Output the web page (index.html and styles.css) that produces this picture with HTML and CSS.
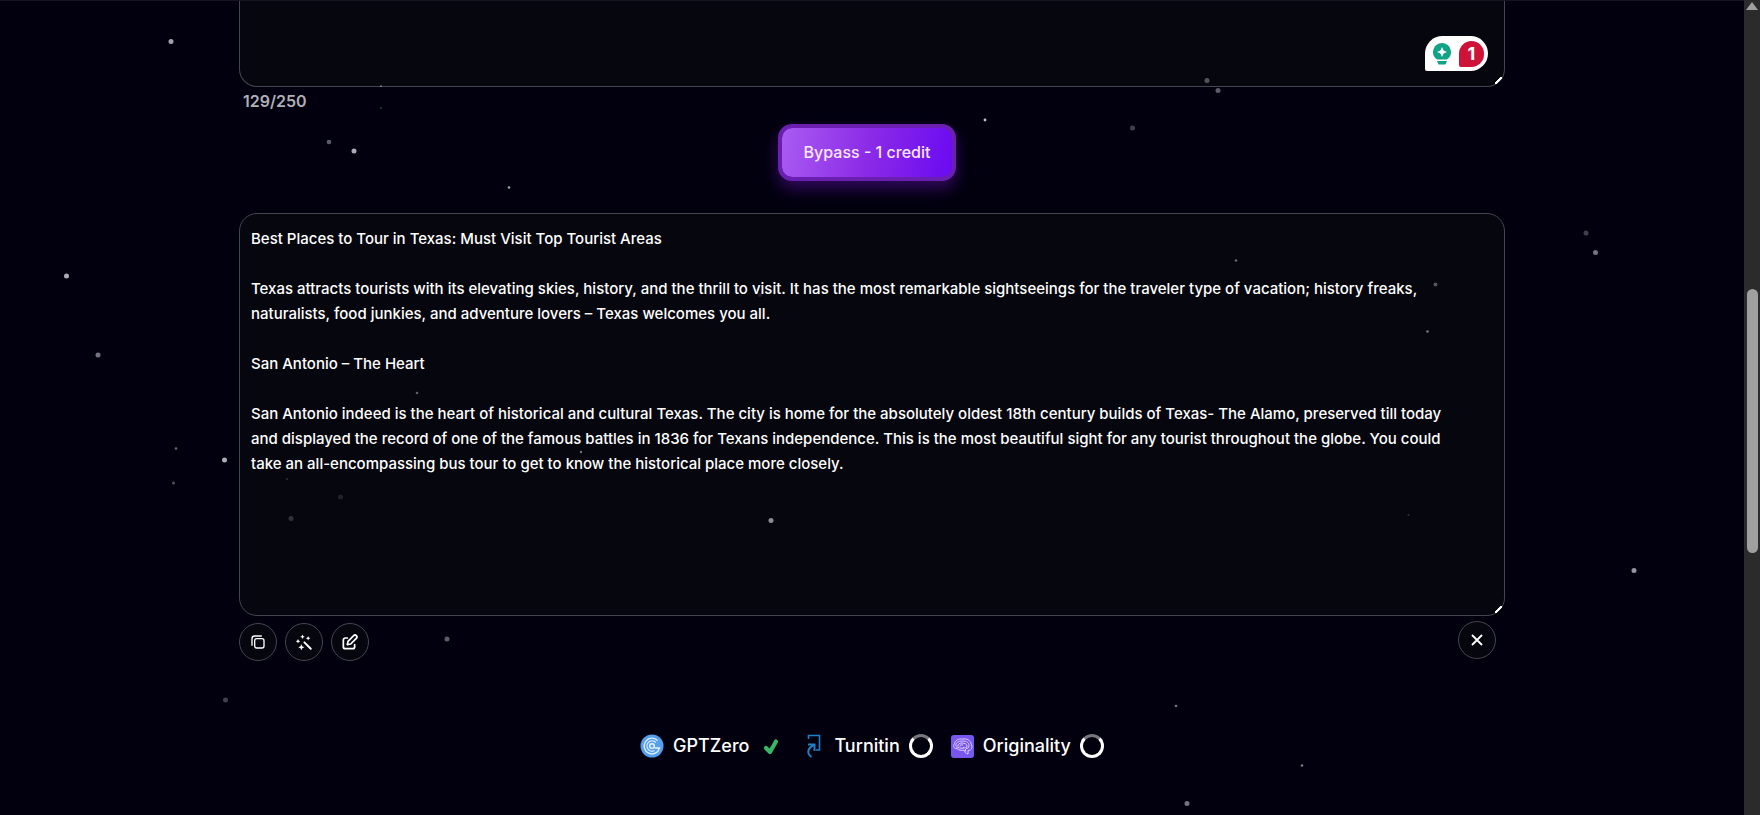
FILE: index.html
```
<!DOCTYPE html>
<html lang="en">
<head>
  <meta charset="UTF-8">
  <meta name="viewport" content="width=device-width, initial-scale=1">
  <title>Bypass</title>
  <link rel="stylesheet" href="styles.css">
</head>
<body>

  <main class="page">
    <section class="container">

      <!-- Input -->
      <div class="field">
        <textarea class="box box-input" aria-label="Your text"></textarea>
        <div class="checker">
          <svg width="18" height="22" viewBox="0 0 18 22">
            <path d="M9 0a9 9 0 0 0-5 16.400h10A9 9 0 0 0 9 0z" fill="#12a386"/>
            <path d="M9 4l1.600 3.400L14 9l-3.400 1.600L9 14l-1.600-3.400L4 9l3.400-1.600z" fill="#fff"/>
            <path d="M4 18h10l-1.500 3.500h-7z" fill="#12a386"/>
          </svg>
          <span class="checker-count">1</span>
        </div>
      </div>
      <p class="counter">129/250</p>

      <div class="submit-row">
        <button class="bypass-btn" type="button">Bypass - 1 credit</button>
      </div>

      <!-- Output -->
      <textarea class="box box-output" aria-label="Result">Best Places to Tour in Texas: Must Visit Top Tourist Areas

Texas attracts tourists with its elevating skies, history, and the thrill to visit. It has the most remarkable sightseeings for the traveler type of vacation; history freaks, naturalists, food junkies, and adventure lovers – Texas welcomes you all.

San Antonio – The Heart

San Antonio indeed is the heart of historical and cultural Texas. The city is home for the absolutely oldest 18th century builds of Texas- The Alamo, preserved till today and displayed the record of one of the famous battles in 1836 for Texans independence. This is the most beautiful sight for any tourist throughout the globe. You could take an all-encompassing bus tour to get to know the historical place more closely.</textarea>

      <div class="tools">
        <div class="tools-left">
          <button class="icon-btn" type="button" aria-label="Copy">
            <svg width="16" height="16" viewBox="0 0 24 24" fill="none" stroke="#fff" stroke-width="2" stroke-linecap="round">
              <rect x="7" y="7" width="14" height="14" rx="3"/>
              <path d="M3 17V7a4 4 0 0 1 4-4h10"/>
            </svg>
          </button>
          <button class="icon-btn" type="button" aria-label="Rewrite">
            <svg width="18" height="18" viewBox="0 0 24 24" fill="#fff">
              <path d="M12.500 12.500L21 21" stroke="#fff" stroke-width="2.600" stroke-linecap="round"/>
              <path d="M10 2l.9 2.100L13 5l-2.100.9L10 8l-.9-2.100L7 5l2.100-.9z"/>
              <path d="M4 8l.9 2.100L7 11l-2.100.9L4 14l-.9-2.100L1 11l2.100-.9z"/>
              <path d="M8.500 15l1.200 2.800 2.800 1.200-2.800 1.200L8.500 23l-1.200-2.800L4.500 19l2.800-1.200z"/>
              <path d="M17.500 4l.9 2.100 2.100.9-2.100.9-.9 2.100-.9-2.100-2.100-.9 2.100-.9z"/>
            </svg>
          </button>
          <button class="icon-btn" type="button" aria-label="Edit">
            <svg width="16" height="16" viewBox="0 0 24 24" fill="none" stroke="#fff" stroke-width="2.600" stroke-linecap="round" stroke-linejoin="round">
              <path d="M8 6H5a3 3 0 0 0-3 3v10a3 3 0 0 0 3 3h11a3 3 0 0 0 3-3v-3"/>
              <path d="M8 16l1-5 8.500-8.500a2.500 2.500 0 0 1 4 4L13 15z"/>
            </svg>
          </button>
        </div>
        <button class="icon-btn" type="button" aria-label="Clear">
          <svg width="14" height="14" viewBox="0 0 14 14" stroke="#fff" stroke-width="1.800">
            <path d="M2 2l10 10M12 2L2 12"/>
          </svg>
        </button>
      </div>

      <!-- Detectors -->
      <ul class="detectors">
        <li class="detector">
          <svg width="24" height="24" viewBox="0 0 24 24" fill="none" stroke="#e2f1ff">
            <circle cx="12" cy="12" r="11.500" fill="#559fec" stroke="none"/>
            <path d="M17.500 6.500A7.800 7.800 0 1 0 19.500 14h-5" stroke-width="1.300"/>
            <path d="M15.800 8.500A5.100 5.100 0 1 0 14.500 16.500" stroke-width="1.200"/>
            <circle cx="12" cy="12" r="2.300" stroke-width="1.500"/>
          </svg>
          <span>GPTZero</span>
          <svg width="26" height="24" viewBox="0 0 26 24">
            <path d="M8 14l4 4 6-10.500" fill="none" stroke="#38b865" stroke-width="4.200" stroke-linecap="round" stroke-linejoin="round"/>
          </svg>
        </li>
        <li class="detector">
          <svg width="24" height="24" viewBox="0 0 24 24" fill="none" stroke="#1f80c6" stroke-width="1.600">
            <path d="M7.500 5V1.500h11V16H15"/>
            <path d="M7 10.500h6.500V17" stroke-width="2"/>
            <path d="M13 11c-6 3-8 8-2.500 12" stroke-width="2"/>
          </svg>
          <span>Turnitin</span>
          <i class="spinner"></i>
        </li>
        <li class="detector">
          <svg width="24" height="24" viewBox="0 0 24 24" fill="none" stroke="#ddd2ff" stroke-width="1">
            <rect x="1" y="1" width="23" height="23" rx="3" fill="#7857ee" stroke="none"/>
            <path d="M18 20v-3.500c4 0 5-4 3-6.500 0-4-4.500-5.500-8.500-5-4-.5-7.500 1.500-8 4.500C2.500 12 4 15 7 14.500c1.500 2 4.500 2 7 1.500.5 2.500 2 3.500 4 4z"/>
            <path d="M6 12c-1-3 2-5 6.500-5s6.500 2 6.500 4.500-1.500 3-3 3"/>
            <path d="M8 12.500c-.5-2.500 1.500-3.500 4-3.500s5 1 5 3-2 2-4 1.500"/>
            <path d="M10 12.500c-.5-1.500 1-2 3-1.500M15.500 15v2.500M6 12.500c2 1.500 5 2 8 1.500"/>
          </svg>
          <span>Originality</span>
          <i class="spinner"></i>
        </li>
      </ul>

    </section>
  </main>

  <!-- Scrollbar -->
  <div class="scrollbar">
    <div class="scroll-arrow"></div>
    <div class="scroll-thumb"></div>
  </div>

  <!-- Stars -->
  <svg class="stars" width="100%" height="100%" fill="#e4e4ee">
    <circle cx="171" cy="41.500" r="2.500" opacity=".7"/>
    <circle cx="381" cy="86" r="1" opacity=".4"/>
    <circle cx="381" cy="108" r="1" opacity=".25"/>
    <circle cx="329" cy="142" r="2.300" opacity=".4"/>
    <circle cx="354" cy="151" r="2.500" opacity=".75"/>
    <circle cx="509" cy="187.500" r="1.300" opacity=".7"/>
    <circle cx="66.500" cy="276" r="2.500" opacity=".75"/>
    <circle cx="98" cy="355" r="2.500" opacity=".5"/>
    <circle cx="417" cy="393" r="1.300" opacity=".4"/>
    <circle cx="176" cy="448.500" r="1.300" opacity=".45"/>
    <circle cx="224.500" cy="460" r="2.500" opacity=".75"/>
    <circle cx="173.500" cy="483" r="1.500" opacity=".35"/>
    <circle cx="581" cy="452" r="1.200" opacity=".5"/>
    <circle cx="287" cy="479" r="1" opacity=".2"/>
    <circle cx="340.500" cy="497" r="2.500" opacity=".12"/>
    <circle cx="291" cy="518.500" r="2.500" opacity=".2"/>
    <circle cx="771" cy="520.500" r="2.500" opacity=".6"/>
    <circle cx="447" cy="639" r="2.500" opacity=".4"/>
    <circle cx="225.500" cy="700" r="2.500" opacity=".28"/>
    <circle cx="760" cy="295" r="2" opacity=".12"/>
    <circle cx="1207" cy="80.500" r="2.500" opacity=".35"/>
    <circle cx="1218" cy="90.500" r="2.500" opacity=".4"/>
    <circle cx="985" cy="120" r="1.400" opacity=".85"/>
    <circle cx="1132.500" cy="128" r="2.500" opacity=".28"/>
    <circle cx="1586" cy="233" r="2.500" opacity=".28"/>
    <circle cx="1595.500" cy="252.500" r="2.500" opacity=".5"/>
    <circle cx="1236" cy="260.500" r="1.300" opacity=".45"/>
    <circle cx="1435.500" cy="284.500" r="2" opacity=".35"/>
    <circle cx="1427.500" cy="331.500" r="1.300" opacity=".5"/>
    <circle cx="1408.500" cy="515" r="1" opacity=".2"/>
    <circle cx="1634" cy="570.500" r="2.500" opacity=".65"/>
    <circle cx="1176" cy="706" r="1.300" opacity=".5"/>
    <circle cx="1302" cy="765.500" r="1.300" opacity=".55"/>
    <circle cx="1187" cy="803.500" r="2.500" opacity=".5"/>
  </svg>

</body>
</html>
```

FILE: styles.css
```
/* RESET */
* {
  margin: 0;
  padding: 0;
  box-sizing: border-box;
}

body {
  display: flex;
  position: relative;
  min-height: 100vh;
  overflow: hidden;
  background: #02000e;
  color: #fff;
  font-family: 'Inter', sans-serif;
}

.page {
  flex: 1;
  border-top: 1px solid #15151f;
}

.container {
  width: calc(100% - 478px);
  margin: 0 auto;
}

/* TEXT BOXES */
.field {
  position: relative;
}

.box {
  display: block;
  width: 100%;
  padding: 12px 40px 12px 11px;
  background: #06060e;
  border: 1px solid #45454f;
  border-radius: 18px;
  outline: none;
  color: #fff;
  font-family: inherit;
  font-size: 15px;
  font-weight: 500;
  line-height: 25px;
  resize: vertical;
}

.box::-webkit-resizer {
  background: linear-gradient(135deg, transparent 40%, #fff 40%, #fff 60%, transparent 60%) no-repeat right 2px bottom 2px / 7px 7px;
}

.box-input {
  height: 86px;
  border-top: none;
  border-radius: 0 0 18px 18px;
}

.box-output {
  height: 403px;
}

.checker {
  position: absolute;
  right: 17px;
  bottom: 16px;
  display: flex;
  align-items: center;
  gap: 8px;
  height: 35px;
  padding: 0 4px 0 8px;
  background: #fff;
  border-radius: 18px 18px 18px 2px;
}

.checker-count {
  width: 25px;
  height: 26px;
  background: #cf1237;
  border-radius: 13px 13px 13px 2px;
  font-size: 18px;
  font-weight: 700;
  line-height: 26px;
  text-align: center;
}

.counter {
  padding: 3px 4px;
  color: #b0b0b8;
  font-size: 16px;
  font-weight: 600;
  line-height: 22px;
}

/* BYPASS BUTTON */
.submit-row {
  display: flex;
  justify-content: center;
  padding: 9px 10px 32px 0;
}

.bypass-btn {
  height: 57px;
  padding: 0 22px 2px;
  border: 4px solid #6a1fb0;
  border-radius: 14px;
  background: linear-gradient(100deg, #a95cf2, #8c2be6 50%, #6a0af2) padding-box, #6a1fb0;
  box-shadow: 0 8px 16px rgba(106, 20, 190, 0.45);
  color: #fce8ff;
  font-family: inherit;
  font-size: 16px;
  font-weight: 500;
  cursor: pointer;
}

/* TOOLS */
.tools {
  display: flex;
  align-items: flex-start;
  justify-content: space-between;
  padding: 5px 9px 0 0;
}

.tools-left {
  display: flex;
  gap: 8px;
  padding-top: 2px;
}

.icon-btn {
  display: flex;
  align-items: center;
  justify-content: center;
  width: 38px;
  height: 38px;
  background: #06060e;
  border: 1px solid #45454f;
  border-radius: 50%;
  cursor: pointer;
}

/* DETECTORS */
.detectors {
  display: flex;
  justify-content: center;
  gap: 17px;
  padding-top: 71px;
  list-style: none;
}

.detector {
  display: flex;
  align-items: center;
  gap: 9px;
  font-size: 18px;
  font-weight: 500;
  line-height: 28px;
}

.spinner {
  width: 24px;
  height: 24px;
  border: 3px solid #fff;
  border-top-color: #77777d;
  border-radius: 50%;
}

/* SCROLLBAR */
.scrollbar {
  display: flex;
  flex-direction: column;
  align-items: center;
  width: 16px;
  background: #2b2b2b;
}

.scroll-arrow {
  margin: 2px 0 279px;
  border: 6px solid transparent;
  border-top: none;
  border-bottom: 8px solid #a0a0a0;
}

.scroll-thumb {
  width: 11px;
  height: 264px;
  background: #9f9f9f;
  border-radius: 6px;
}

/* STARS */
.stars {
  position: absolute;
  inset: 0;
  pointer-events: none;
}
```
